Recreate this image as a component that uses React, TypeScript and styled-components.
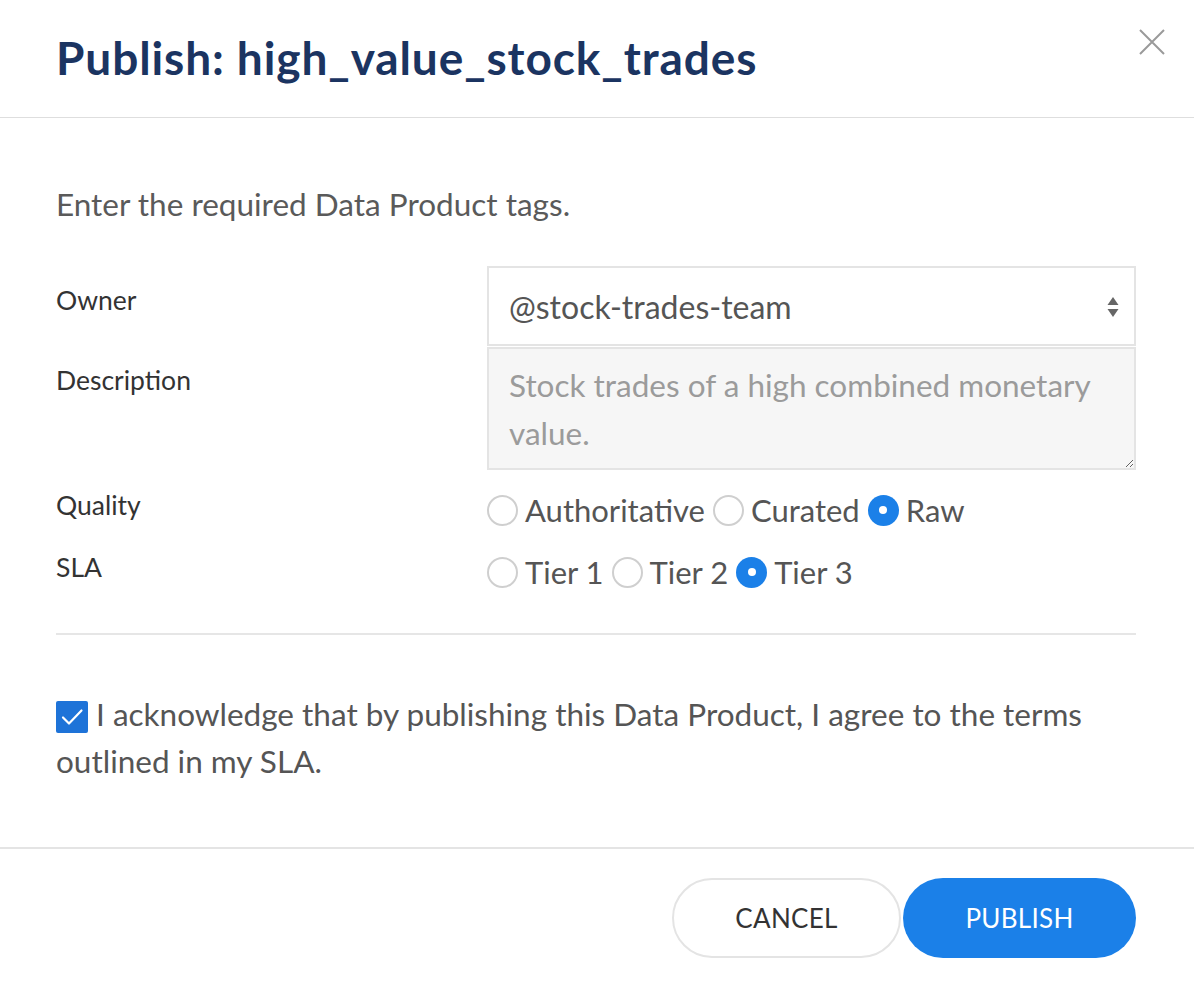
import React from 'react';
import styled, { createGlobalStyle } from 'styled-components';

const GlobalStyle = createGlobalStyle`
  html, body {
    margin: 0;
    padding: 0;
    background: #ffffff;
  }
  body {
    font-family: Lato, 'Noto Sans', sans-serif;
  }
  * {
    box-sizing: border-box;
  }
`;

type Option = { label: string; checked?: boolean };

const qualityOptions: Option[] = [
  { label: 'Authoritative' },
  { label: 'Curated' },
  { label: 'Raw', checked: true },
];

const slaOptions: Option[] = [
  { label: 'Tier 1' },
  { label: 'Tier 2' },
  { label: 'Tier 3', checked: true },
];

const RadioGroup = ({ options }: { options: Option[] }) => (
  <Radios>
    {options.map((o) => (
      <RadioItem key={o.label}>
        <RadioCircle checked={!!o.checked} />
        <RadioText>{o.label}</RadioText>
      </RadioItem>
    ))}
  </Radios>
);

const App = () => {
  return (
    <>
      <GlobalStyle />
      <Modal>
        <Header>
          <Title>Publish: high_value_stock_trades</Title>
          <CloseButton aria-label="Close">
            <svg width="28" height="28" viewBox="0 0 28 28">
              <path
                d="M2 2 L26 26 M26 2 L2 26"
                stroke="#9a9a9a"
                strokeWidth="2"
                fill="none"
              />
            </svg>
          </CloseButton>
        </Header>

        <Body>
          <Intro>Enter the required Data Product tags.</Intro>

          <Form>
            <Label>Owner</Label>
            <SelectWrap>
              <SelectValue>@stock-trades-team</SelectValue>
              <SelectArrows width="14" height="24" viewBox="0 0 14 24">
                <path d="M7 2 L12.5 10 L1.5 10 Z" fill="#666" />
                <path d="M7 22 L12.5 14 L1.5 14 Z" fill="#666" />
              </SelectArrows>
            </SelectWrap>

            <Label>Description</Label>
            <TextArea
              readOnly
              placeholder="Stock trades of a high combined monetary value."
            />

            <ShortLabel>Quality</ShortLabel>
            <RadioGroup options={qualityOptions} />

            <ShortLabel>SLA</ShortLabel>
            <RadioGroup options={slaOptions} />
          </Form>

          <Divider />

          <Acknowledge>
            <CheckBox>
              <svg width="26" height="26" viewBox="0 0 26 26">
                <path
                  d="M4 13.5 L10 19.5 L22.5 6.5"
                  stroke="#fff"
                  strokeWidth="2.2"
                  fill="none"
                  strokeLinecap="round"
                  strokeLinejoin="round"
                />
              </svg>
            </CheckBox>
            I acknowledge that by publishing this Data Product, I agree to the
            terms outlined in my SLA.
          </Acknowledge>
        </Body>

        <Footer>
          <Button>CANCEL</Button>
          <Button primary>PUBLISH</Button>
        </Footer>
      </Modal>
    </>
  );
};

export default App;

const Modal = styled.div`
  width: 1194px;
  height: 984px;
  background: #fff;
  display: flex;
  flex-direction: column;
`;

const Header = styled.header`
  height: 118px;
  border-bottom: 1px solid #dedede;
  padding: 0 28px 0 56px;
  display: flex;
  align-items: flex-start;
  justify-content: space-between;
`;

const Title = styled.h1`
  margin: 28px 0 0;
  font-size: 46px;
  line-height: 60px;
  font-weight: 700;
  color: #1b3461;
  letter-spacing: 0.9px;
`;

const CloseButton = styled.button`
  margin-top: 28px;
  background: none;
  border: none;
  padding: 0;
  cursor: pointer;
  display: flex;
`;

const Body = styled.main`
  flex: 1;
  padding: 66px 58px 0 56px;
  display: flex;
  flex-direction: column;
`;

const Intro = styled.p`
  margin: 0;
  font-size: 31.5px;
  line-height: 40px;
  color: #5a5a5a;
`;

const Form = styled.div`
  margin-top: 42px;
  display: grid;
  grid-template-columns: 431px 1fr;
  grid-auto-rows: auto;
`;

const Label = styled.div`
  font-size: 26.5px;
  line-height: 40px;
  padding-top: 14px;
  color: #333;
`;

const ShortLabel = styled(Label)`
  padding-top: 6px;
  height: 62px;
`;

const SelectWrap = styled.div`
  position: relative;
  height: 80px;
  border: 2px solid #e4e4e4;
  display: flex;
  align-items: center;
  padding: 0 20px;
`;

const SelectValue = styled.span`
  font-size: 32px;
  color: #555;
`;

const SelectArrows = styled.svg`
  position: absolute;
  right: 14px;
  top: 27px;
`;

const TextArea = styled.textarea`
  display: block;
  width: 100%;
  height: 123px;
  margin: 1px 0 9px;
  background: #f6f6f6;
  border: 2px solid #e4e4e4;
  border-radius: 0;
  padding: 12px 20px;
  font-family: Lato, 'Noto Sans', sans-serif;
  font-size: 31.5px;
  line-height: 48px;
  color: #555;
  outline: none;
  &::placeholder {
    color: #9b9b9b;
  }
`;

const Radios = styled.div`
  height: 62px;
  display: flex;
  align-items: center;
  gap: 8px;
`;

const RadioItem = styled.label`
  display: flex;
  align-items: center;
  gap: 7px;
`;

const RadioCircle = styled.span<{ checked: boolean }>`
  width: 31px;
  height: 31px;
  border-radius: 50%;
  flex: none;
  position: relative;
  border: ${({ checked }) => (checked ? 'none' : '2px solid #cfcfcf')};
  background: ${({ checked }) => (checked ? '#1b80e8' : '#fff')};

  &::after {
    content: '';
    display: ${({ checked }) => (checked ? 'block' : 'none')};
    position: absolute;
    width: 8px;
    height: 8px;
    border-radius: 50%;
    background: #fff;
    left: 11.5px;
    top: 11.5px;
  }
`;

const RadioText = styled.span`
  font-size: 31px;
  color: #555;
`;

const Divider = styled.hr`
  margin: 30px 0 0;
  border: none;
  border-top: 2px solid #e6e6e6;
`;

const Acknowledge = styled.p`
  margin: 56px 0 0;
  font-size: 31.5px;
  line-height: 47px;
  color: #555;
`;

const CheckBox = styled.span`
  display: inline-flex;
  align-items: center;
  justify-content: center;
  width: 32px;
  height: 32px;
  margin-right: 8px;
  vertical-align: -4px;
  background: #1e73d8;
  border-radius: 2px;
`;

const Footer = styled.footer`
  height: 137px;
  border-top: 2px solid #e4e4e4;
  padding: 29px 58px 0 0;
  display: flex;
  justify-content: flex-end;
  align-items: flex-start;
  gap: 2px;
`;

const Button = styled.button<{ primary?: boolean }>`
  height: 80px;
  width: ${({ primary }) => (primary ? '233px' : '229px')};
  border-radius: 40px;
  font-family: Lato, 'Noto Sans', sans-serif;
  font-size: 26px;
  letter-spacing: 0.3px;
  cursor: pointer;
  border: ${({ primary }) => (primary ? 'none' : '2px solid #e4e4e4')};
  background: ${({ primary }) => (primary ? '#1b80e8' : '#fff')};
  color: ${({ primary }) => (primary ? '#fff' : '#333')};
`;
